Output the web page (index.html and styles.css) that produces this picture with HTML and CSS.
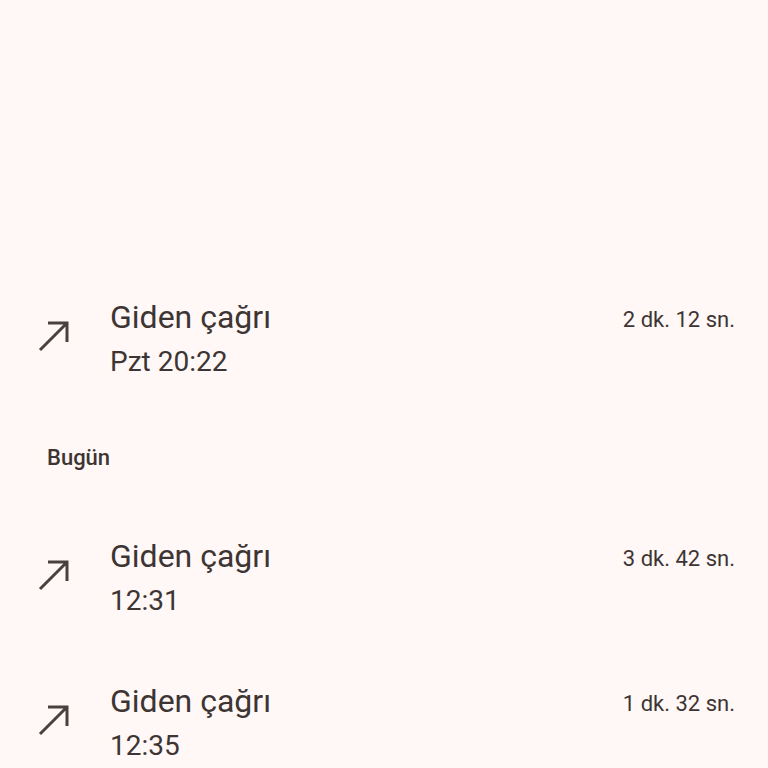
FILE: index.html
```html
<!DOCTYPE html>
<html lang="tr">
<head>
    <meta charset="UTF-8">
    <title>Arama geçmişi</title>
    <link rel="stylesheet" href="styles.css">
</head>
<body>
    <div class="history">
        <!-- önceki gün -->
        <div class="call-row">
            <svg class="call-icon" viewBox="0 0 34 34"><path d="M4 32 L31 5 M12 5 H31 V24"/></svg>
            <div class="call-text">
                <div class="call-title">Giden çağrı</div>
                <div class="call-time">Pzt 20:22</div>
            </div>
            <div class="call-duration">2 dk. 12 sn.</div>
        </div>

        <div class="day-header">Bugün</div>

        <div class="call-row">
            <svg class="call-icon" viewBox="0 0 34 34"><path d="M4 32 L31 5 M12 5 H31 V24"/></svg>
            <div class="call-text">
                <div class="call-title">Giden çağrı</div>
                <div class="call-time">12:31</div>
            </div>
            <div class="call-duration">3 dk. 42 sn.</div>
        </div>

        <div class="call-row">
            <svg class="call-icon" viewBox="0 0 34 34"><path d="M4 32 L31 5 M12 5 H31 V24"/></svg>
            <div class="call-text">
                <div class="call-title">Giden çağrı</div>
                <div class="call-time">12:35</div>
            </div>
            <div class="call-duration">1 dk. 32 sn.</div>
        </div>
    </div>
</body>
</html>
```

FILE: styles.css
```css
body {
    margin: 0;
    background: #fff8f6;
    font-family: Roboto, "Noto Sans", sans-serif;
    color: #3d3533;
    overflow: hidden;
}
.history {
    padding-top: 267px;
}
.call-row {
    display: flex;
    align-items: flex-start;
    padding: 28px 33px 28px 36px;
}
.call-icon {
    width: 34px;
    height: 34px;
    margin-top: 23px;
    margin-right: 40px;
    fill: none;
    stroke: #4a403d;
    stroke-width: 3;
}
.call-text {
    flex: 1;
}
.call-title {
    font-size: 32px;
    line-height: 45px;
}
.call-time {
    font-size: 28px;
    line-height: 44px;
}
.call-duration {
    font-size: 22px;
    line-height: 45px;
    margin-top: 2px;
}
.day-header {
    margin: 32px 0 34px 47px;
    font-size: 22px;
    line-height: 28px;
    font-weight: 500;
}
```
